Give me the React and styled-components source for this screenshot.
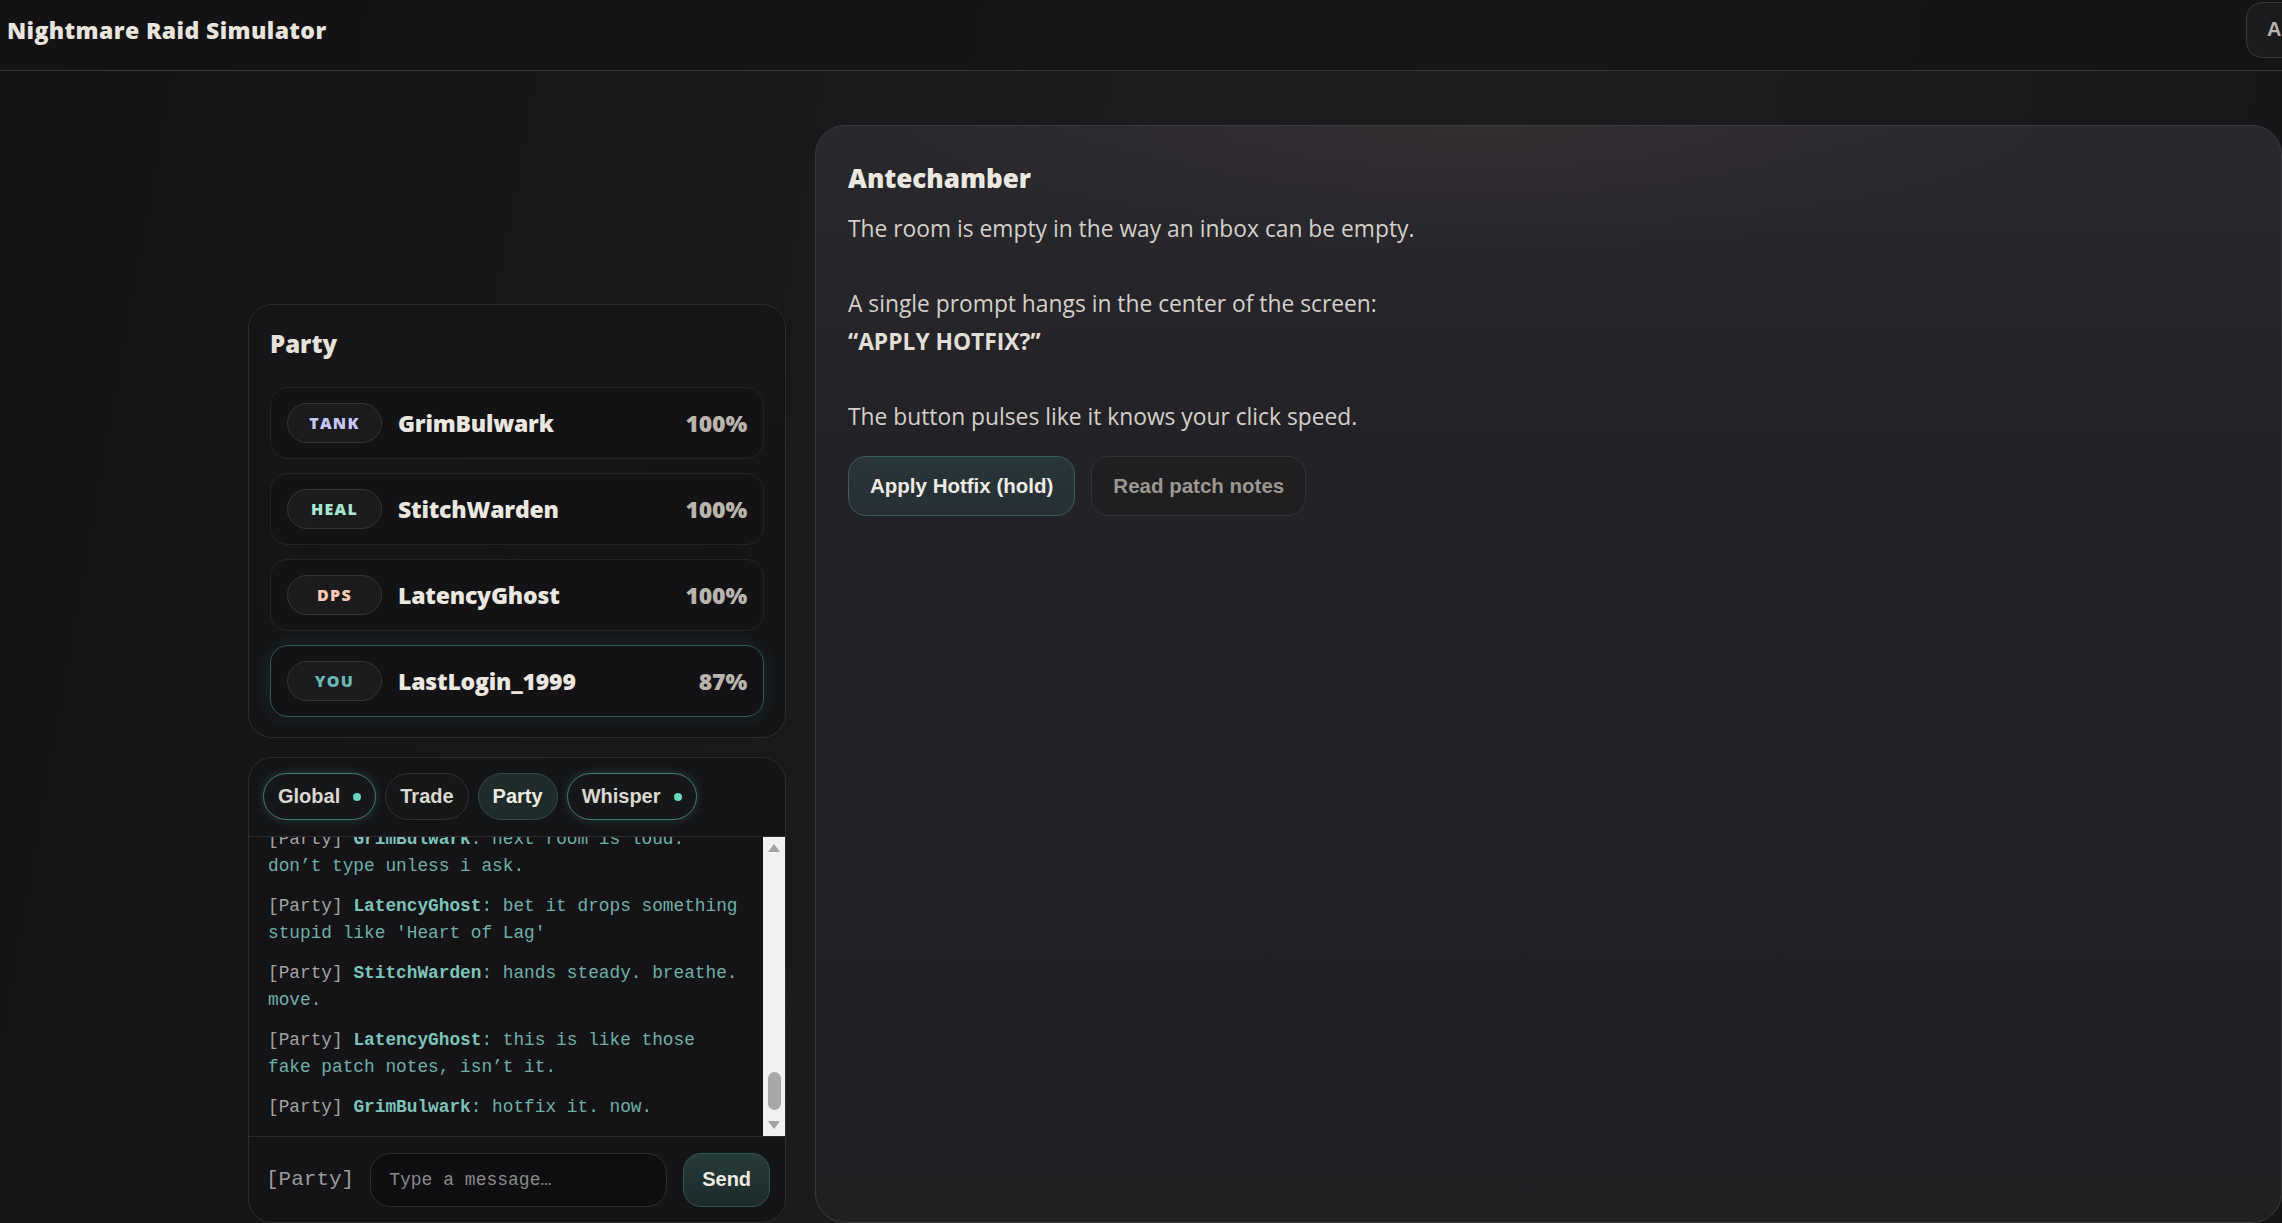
import React from "react";
import styled, { createGlobalStyle, css } from "styled-components";

const GlobalStyle = createGlobalStyle`
  * { box-sizing: border-box; }
  html, body { margin: 0; padding: 0; height: 100%; }
  body {
    overflow: hidden;
    background: #171719;
    color: #e6e2da;
    font-family: "Open Sans", "Noto Sans", sans-serif;
  }
  #root { height: 100%; }
`;

const Page = styled.div`
  height: 100vh;
  background:
    linear-gradient(100deg, #141416 0%, #171719 22%, #1b1b1d 45%, #1d1d1f 62%, #19191b 82%, #151517 100%);
`;

const Header = styled.header`
  display: flex;
  align-items: center;
  height: 71px;
  padding: 2px 0 13px 7px;
  border-bottom: 1px solid #353537;
  background: rgba(18, 18, 20, 0.55);
`;

const Title = styled.h1`
  margin: 0;
  font-size: 23px;
  line-height: 30px;
  font-weight: 800;
  color: #e9e5dd;
  letter-spacing: 0.4px;
`;

const HeaderActions = styled.div`
  display: flex;
  gap: 12px;
  margin-left: auto;
  margin-right: -110px;
`;

const HeaderButton = styled.button`
  width: 146px;
  height: 56px;
  padding: 0 20px;
  border-radius: 16px;
  border: 1px solid #38383b;
  background: #1b1b1d;
  color: #b8b4ac;
  font: 700 20px "Liberation Sans", Arial, sans-serif;
  text-align: left;
`;

const Layout = styled.main`
  display: grid;
  grid-template-columns: 538px 1467px;
  column-gap: 29px;
  height: calc(100vh - 71px);
  padding: 54px 0 0 248px;
`;

const Sidebar = styled.aside`
  align-self: end;
  display: flex;
  flex-direction: column;
  gap: 19px;
`;

const Card = styled.section`
  border: 1px solid #2c2c2f;
  border-radius: 24px;
  background: #151517;
`;

const PartyCard = styled(Card)`
  padding: 24px 21px 20px;
  background: linear-gradient(160deg, #161618 0%, #141416 100%);
`;

const CardTitle = styled.h2`
  margin: 0 0 28px;
  font-size: 24px;
  line-height: 30px;
  font-weight: 800;
  color: #e6e2da;
`;

const MemberList = styled.div`
  display: flex;
  flex-direction: column;
  gap: 14px;
`;

const MemberRow = styled.div`
  display: flex;
  align-items: center;
  gap: 16px;
  height: 72px;
  padding: 0 16px;
  border-radius: 18px;
  border: 1px solid ${(p) => (p.$you ? "#2d5a5a" : "#242427")};
  background: #131315;
  ${(p) =>
    p.$you &&
    css`
      box-shadow: 0 0 18px rgba(70, 150, 150, 0.14);
    `}
`;

const RolePill = styled.span`
  flex: none;
  display: flex;
  align-items: center;
  justify-content: center;
  width: 95px;
  height: 40px;
  border-radius: 20px;
  border: 1px solid #343437;
  background: #1b1b1d;
  color: ${(p) => p.$color};
  font-size: 16px;
  font-weight: 800;
  letter-spacing: 1.3px;
`;

const MemberName = styled.span`
  flex: 1;
  font-size: 23px;
  font-weight: 800;
  letter-spacing: -0.2px;
  color: #ece8e0;
`;

const MemberHp = styled.span`
  font-size: 23px;
  font-weight: 800;
  letter-spacing: -0.2px;
  color: #bab5ac;
`;

const ChatCard = styled(Card)`
  display: flex;
  flex-direction: column;
  height: 466px;
  overflow: hidden;
  background: #141416;
`;

const TabBar = styled.div`
  display: flex;
  gap: 9px;
  padding: 15px 14px 16px;
  border-bottom: 1px solid #2c2c2f;
`;

const Tab = styled.button`
  display: flex;
  align-items: center;
  gap: 13px;
  height: 47px;
  padding: 0 14px;
  border-radius: 24px;
  font: 700 20px "Liberation Sans", Arial, sans-serif;
  color: ${(p) => (p.$active ? "#eeeae2" : "#dcd8d0")};
  border: 1px solid
    ${(p) => (p.$active ? "#2f4b4a" : p.$unread ? "#3e7d75" : "#323235")};
  background: ${(p) => (p.$active ? "#1f2a2a" : "#151719")};
  ${(p) =>
    p.$unread &&
    css`
      box-shadow: 0 0 10px rgba(90, 200, 180, 0.22);
    `}
`;

const UnreadDot = styled.span`
  width: 8px;
  height: 8px;
  border-radius: 50%;
  background: #6ad6c2;
`;

const ChatBody = styled.div`
  display: flex;
  height: 300px;
  border-bottom: 1px solid #2c2c2f;
`;

/* newest messages sit at the bottom; older ones slide out over the top edge */
const MessageList = styled.div`
  flex: 1;
  min-width: 0;
  overflow: hidden;
  display: flex;
  flex-direction: column;
  justify-content: flex-end;
  padding: 0 20px 15px 19px;
`;

const Message = styled.p`
  flex: none;
  margin: 0 0 13px;
  font: 17.8px/27px "Liberation Mono", "DejaVu Sans Mono", monospace;
  color: #6eb0aa;
  &:last-child {
    margin-bottom: 0;
  }
`;

const Channel = styled.span`
  color: #a3a3a3;
`;

const Author = styled.b`
  color: #7cc3bb;
`;

const ScrollRail = styled.div`
  flex: none;
  display: flex;
  flex-direction: column;
  width: 22px;
  background: #f1f1f1;
`;

const RailArrow = styled.span`
  flex: none;
  display: flex;
  align-items: center;
  justify-content: center;
  height: 22px;
  &::before {
    content: "";
    width: 0;
    height: 0;
    border-left: 6px solid transparent;
    border-right: 6px solid transparent;
    ${(p) =>
      p.$down
        ? css`
            border-top: 8px solid #a3a3a3;
          `
        : css`
            border-bottom: 8px solid #a3a3a3;
          `}
  }
`;

const RailTrack = styled.div`
  flex: 1;
  display: flex;
  flex-direction: column;
  justify-content: flex-end;
  align-items: center;
  padding: 4px 0;
`;

const RailThumb = styled.div`
  width: 13px;
  border-radius: 7px;
  background: #a8a8a8;
`;

const Composer = styled.form`
  flex: 1;
  display: flex;
  align-items: center;
  gap: 16px;
  padding: 0 15px 0 17px;
`;

const ComposerLabel = styled.span`
  font: 21px "Liberation Mono", "DejaVu Sans Mono", monospace;
  color: #9a9a9a;
`;

const ComposerInput = styled.input`
  width: 298px;
  height: 54px;
  padding: 0 18px;
  border-radius: 20px;
  border: 1px solid #2e2e31;
  background: #0e0e10;
  color: #d8d4cc;
  font: 18px "Liberation Mono", "DejaVu Sans Mono", monospace;
  outline: none;
  &::placeholder {
    color: #8a8a8a;
  }
`;

const SendButton = styled.button`
  width: 87px;
  height: 54px;
  border-radius: 18px;
  border: 1px solid #2f5654;
  background: linear-gradient(180deg, #273a3a 0%, #1c2a2a 100%);
  color: #eeeae2;
  font: 700 20px "Liberation Sans", Arial, sans-serif;
`;

const RoomPanel = styled.section`
  border: 1px solid #39393c;
  border-radius: 30px;
  padding: 36px 32px;
  background:
    radial-gradient(ellipse 760px 170px at 45% 0%, rgba(120, 70, 80, 0.14), transparent 75%),
    linear-gradient(180deg, #29292d 0%, #232327 28%, #202023 100%);
`;

const RoomTitle = styled.h2`
  margin: 0 0 16px;
  font-size: 26px;
  line-height: 32px;
  font-weight: 800;
  color: #ece8e0;
`;

const RoomText = styled.p`
  margin: 0 0 21px;
  font-size: 22.8px;
  line-height: 37.5px;
  color: #d4d0c8;
  white-space: pre-line;
  strong {
    font-weight: 700;
    color: #e2ded6;
  }
`;

const Actions = styled.div`
  display: flex;
  gap: 16px;
`;

const ActionButton = styled.button`
  height: 60px;
  padding: 0 21px;
  border-radius: 18px;
  font: 700 20.5px "Liberation Sans", Arial, sans-serif;
  ${(p) =>
    p.$primary
      ? css`
          border: 1px solid #3a5d5e;
          background: linear-gradient(180deg, #2a3539 0%, #263034 100%);
          color: #f0ece4;
        `
      : css`
          border: 1px solid #343437;
          background: #1f1f22;
          color: #9b978f;
        `}
`;

const party = [
  { role: "TANK", color: "#c5c8ff", name: "GrimBulwark", hp: 100 },
  { role: "HEAL", color: "#a6e8cf", name: "StitchWarden", hp: 100 },
  { role: "DPS", color: "#ffcdb6", name: "LatencyGhost", hp: 100 },
  { role: "YOU", color: "#69b7b3", name: "LastLogin_1999", hp: 87, you: true },
];

const tabs = [
  { label: "Global", unread: true },
  { label: "Trade" },
  { label: "Party", active: true },
  { label: "Whisper", unread: true },
];

const chat = [
  ["StitchWarden", "invite accepted. hi."],
  ["GrimBulwark", "gear check in five."],
  ["LatencyGhost", "my ping says 999. that's fine right"],
  ["StitchWarden", "it's not fine."],
  ["GrimBulwark", "stack on me for the pull."],
  ["LatencyGhost", "which pull"],
  ["GrimBulwark", "the one we're doing."],
  ["StitchWarden", "who is LastLogin_1999?"],
  ["LatencyGhost", "they were in the guild before it was a guild."],
  ["GrimBulwark", "last seen: never."],
  ["StitchWarden", "welcome back, i guess."],
  ["LatencyGhost", "did anyone else's screen just flicker"],
  ["GrimBulwark", "no."],
  ["StitchWarden", "yes."],
  ["LatencyGhost", "cool cool cool"],
  ["GrimBulwark", "door's open. walk."],
  ["StitchWarden", "stay in my range. i mean it this time."],
  ["LatencyGhost", "the minimap is just static now"],
  ["GrimBulwark", "ignore the minimap."],
  ["StitchWarden", "ignore the whispers too."],
  ["LatencyGhost", "what whispers"],
  ["GrimBulwark", "trash pack cleared. loot later."],
  ["LatencyGhost", "there's a chest that says OPEN ME"],
  ["StitchWarden", "do not open it."],
  ["LatencyGhost", "already opened it. it was empty."],
  ["GrimBulwark", "next room is loud. don’t type unless i ask."],
  ["LatencyGhost", "bet it drops something stupid like 'Heart of Lag'"],
  ["StitchWarden", "hands steady. breathe. move."],
  ["LatencyGhost", "this is like those fake patch notes, isn’t it."],
  ["GrimBulwark", "hotfix it. now."],
];

// only the tail of the log is mounted; the rail reflects the whole history
const SHOWN = 5;
const VIEWPORT_SHARE = 4.6 / chat.length;

function PartyPanel() {
  return (
    <PartyCard>
      <CardTitle>Party</CardTitle>
      <MemberList>
        {party.map((m) => (
          <MemberRow key={m.name} $you={m.you}>
            <RolePill $color={m.color}>{m.role}</RolePill>
            <MemberName>{m.name}</MemberName>
            <MemberHp>{m.hp}%</MemberHp>
          </MemberRow>
        ))}
      </MemberList>
    </PartyCard>
  );
}

function ChatPanel() {
  const tail = chat.slice(-SHOWN);
  return (
    <ChatCard>
      <TabBar>
        {tabs.map((t) => (
          <Tab key={t.label} type="button" $active={t.active} $unread={t.unread}>
            {t.label}
            {t.unread && <UnreadDot />}
          </Tab>
        ))}
      </TabBar>
      <ChatBody>
        <MessageList>
          {tail.map(([who, text], i) => (
            <Message key={i}>
              <Channel>[Party]</Channel> <Author>{who}</Author>: {text}
            </Message>
          ))}
        </MessageList>
        <ScrollRail>
          <RailArrow />
          <RailTrack>
            <RailThumb style={{ height: `${VIEWPORT_SHARE * 100}%` }} />
          </RailTrack>
          <RailArrow $down />
        </ScrollRail>
      </ChatBody>
      <Composer onSubmit={(e) => e.preventDefault()}>
        <ComposerLabel>[Party]</ComposerLabel>
        <ComposerInput placeholder="Type a message…" />
        <SendButton type="submit">Send</SendButton>
      </Composer>
    </ChatCard>
  );
}

function Room() {
  return (
    <RoomPanel>
      <RoomTitle>Antechamber</RoomTitle>
      <RoomText>
        {"The room is empty in the way an inbox can be empty.\n\nA single prompt hangs in the center of the screen:\n"}
        <strong>“APPLY HOTFIX?”</strong>
        {"\n\nThe button pulses like it knows your click speed."}
      </RoomText>
      <Actions>
        <ActionButton type="button" $primary>
          Apply Hotfix (hold)
        </ActionButton>
        <ActionButton type="button">Read patch notes</ActionButton>
      </Actions>
    </RoomPanel>
  );
}

export default function App() {
  return (
    <>
      <GlobalStyle />
      <Page>
        <Header>
          <Title>Nightmare Raid Simulator</Title>
          <HeaderActions>
            <HeaderButton type="button">Audio</HeaderButton>
          </HeaderActions>
        </Header>
        <Layout>
          <Sidebar>
            <PartyPanel />
            <ChatPanel />
          </Sidebar>
          <Room />
        </Layout>
      </Page>
    </>
  );
}
